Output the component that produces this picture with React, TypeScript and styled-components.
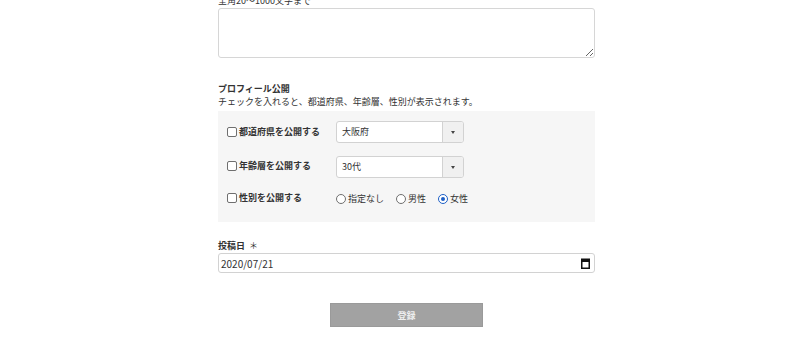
import styled, { createGlobalStyle } from 'styled-components';

const GlobalStyle = createGlobalStyle`
  body {
    margin: 0;
    background: #fff;
    color: #333;
    font-family: "Noto Sans CJK JP", "Noto Sans", sans-serif;
    font-size: 9px;
    overflow: hidden;
  }
`

const Form = styled.form`
  width: 377px;
  margin: -5px 0 0 218px;
  display: flex;
  flex-direction: column;
`

const Hint = styled.div`
  font-size: 9px;
  line-height: 12px;
  height: 12px;
  margin-bottom: 1px;
`

const TextArea = styled.textarea`
  box-sizing: border-box;
  width: 100%;
  height: 50px;
  border: 1px solid #d6d6d6;
  border-radius: 3px;
  padding: 4px;
  font-family: inherit;
  font-size: 10px;
  resize: vertical;
  outline: none;
`

const SectionTitle = styled.div`
  font-weight: bold;
  font-size: 9px;
  line-height: 13px;
  margin-top: ${(p: { $top: number }) => p.$top}px;
`

const SubText = styled.div`
  font-size: 9px;
  line-height: 13px;
  margin-bottom: 3px;
`

const Panel = styled.div`
  background: #f6f6f6;
  padding: 10px 9px 15px;
  display: flex;
  flex-direction: column;
  gap: 13px;
`

const Row = styled.div`
  display: flex;
  align-items: center;
  min-height: 16px;
`

const CheckLabel = styled.label`
  width: 109px;
  display: flex;
  align-items: center;
  gap: 2px;
  font-weight: bold;
  font-size: 9px;
  line-height: 12px;
  align-self: center;
  margin-top: ${(p: { $shift?: number }) => p.$shift ?? 0}px;
`

const Box = styled.span`
  box-sizing: border-box;
  width: 10px;
  height: 10px;
  border: 1px solid #6f6f6f;
  border-radius: 2px;
  background: #fff;
`

const SelectBox = styled.div`
  box-sizing: border-box;
  width: 128px;
  height: 22px;
  border: 1px solid #d2d2d2;
  border-radius: 3px;
  background: #fff;
  display: flex;
  overflow: hidden;
`

const SelectValue = styled.span`
  flex: 1;
  padding-left: 5px;
  font-size: 9px;
  line-height: 20px;
`

const SelectArrow = styled.span`
  width: 20px;
  border-left: 1px solid #d2d2d2;
  background: #f0f0f0;
  display: flex;
  align-items: center;
  justify-content: center;
  &::after {
    content: '';
    border-left: 2.5px solid transparent;
    border-right: 2.5px solid transparent;
    border-top: 3px solid #444;
  }
`

const RadioGroup = styled.div`
  display: flex;
  align-items: center;
  gap: 12px;
`

const RadioLabel = styled.label`
  display: flex;
  align-items: center;
  gap: 2px;
  font-size: 9px;
  line-height: 12px;
`

const RadioDot = styled.span<{ $on?: boolean }>`
  box-sizing: border-box;
  width: 10px;
  height: 10px;
  border-radius: 50%;
  border: 1px solid ${(p) => (p.$on ? '#1d5fc6' : '#6f6f6f')};
  background: #fff;
  display: flex;
  align-items: center;
  justify-content: center;
  &::after {
    content: '';
    width: 4px;
    height: 4px;
    border-radius: 50%;
    background: ${(p) => (p.$on ? '#1d5fc6' : 'transparent')};
  }
`

const Required = styled.span`
  margin-left: 4px;
  font-weight: normal;
`

const DateField = styled.div`
  box-sizing: border-box;
  width: 100%;
  height: 20px;
  margin-top: 1px;
  border: 1px solid #d2d2d2;
  border-radius: 3px;
  background: #fff;
  display: flex;
  align-items: center;
  justify-content: space-between;
  padding: 0 4px 0 2px;
  font-size: 10px;
`

const SubmitButton = styled.button`
  align-self: center;
  width: 153px;
  height: 24px;
  margin-top: 30px;
  border: 1px solid #9a9a9a;
  background: #a2a2a2;
  color: #eeeeee;
  font-family: inherit;
  font-weight: bold;
  font-size: 9px;
  cursor: pointer;
`

function Calendar() {
  return (
    <svg width="9" height="11" viewBox="0 0 9 11">
      <rect x="0.75" y="1.25" width="7.5" height="9" fill="none" stroke="#111" strokeWidth="1.5" />
      <rect x="0" y="1" width="9" height="3" fill="#111" />
    </svg>
  )
}

export default function App() {
  return (
    <>
      <GlobalStyle />
      <Form onSubmit={(e) => e.preventDefault()}>
        <Hint>全角20〜1000文字まで</Hint>
        <TextArea />

        <SectionTitle $top={24}>プロフィール公開</SectionTitle>
        <SubText>チェックを入れると、都道府県、年齢層、性別が表示されます。</SubText>
        <Panel>
          <Row>
            <CheckLabel $shift={-1}><Box />都道府県を公開する</CheckLabel>
            <SelectBox>
              <SelectValue>大阪府</SelectValue>
              <SelectArrow />
            </SelectBox>
          </Row>
          <Row>
            <CheckLabel $shift={-2}><Box />年齢層を公開する</CheckLabel>
            <SelectBox>
              <SelectValue>30代</SelectValue>
              <SelectArrow />
            </SelectBox>
          </Row>
          <Row>
            <CheckLabel $shift={-2}><Box />性別を公開する</CheckLabel>
            <RadioGroup>
              <RadioLabel><RadioDot />指定なし</RadioLabel>
              <RadioLabel><RadioDot />男性</RadioLabel>
              <RadioLabel><RadioDot $on />女性</RadioLabel>
            </RadioGroup>
          </Row>
        </Panel>

        <SectionTitle $top={17}>投稿日<Required>＊</Required></SectionTitle>
        <DateField>
          <span>2020/07/21</span>
          <Calendar />
        </DateField>

        <SubmitButton type="submit">登録</SubmitButton>
      </Form>
    </>
  )
}
